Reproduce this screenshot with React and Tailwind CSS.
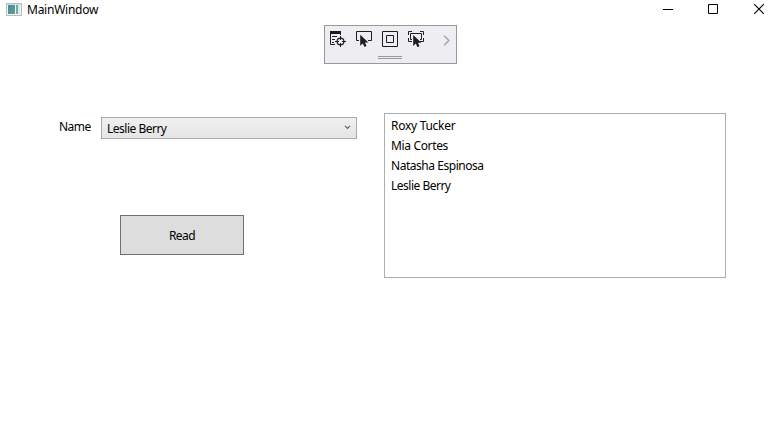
const NAMES = [
  { name: 'Roxy Tucker', tracking: 'tracking-[-0.28px]' },
  { name: 'Mia Cortes', tracking: 'tracking-[-0.35px]' },
  { name: 'Natasha Espinosa', tracking: 'tracking-[-0.46px]' },
  { name: 'Leslie Berry', tracking: 'tracking-[-0.5px]' },
];

function AppIcon() {
  return (
    <svg width="16" height="14" viewBox="0 0 16 14" shapeRendering="crispEdges">
      <defs>
        <linearGradient id="pane" x1="0" y1="0" x2="1" y2="1">
          <stop offset="0" stopColor="#4a86a8" />
          <stop offset="1" stopColor="#58a58a" />
        </linearGradient>
        <linearGradient id="strip" x1="0" y1="0" x2="0" y2="1">
          <stop offset="0" stopColor="#6fa3b8" />
          <stop offset="1" stopColor="#6fb98a" />
        </linearGradient>
      </defs>
      <rect x="0.5" y="0.5" width="15" height="12" fill="#f6f6f6" stroke="#b9bbbe" />
      <rect x="1" y="1" width="14" height="1" fill="#d9dbde" />
      <rect x="2" y="2" width="7" height="9" fill="url(#pane)" />
      <rect x="10" y="2" width="2" height="9" fill="url(#strip)" />
      <rect x="12" y="2" width="2" height="9" fill="#dfe5e8" />
    </svg>
  );
}

function Cursor({ x, y }) {
  return (
    <path
      transform={`translate(${x} ${y})`}
      d="M0 0V11L2.6 8.6L4.3 12.2L6.3 11.3L4.8 7.8H8.2Z"
      fill="#1e1e1e"
      stroke="none"
    />
  );
}

function LiveTreeIcon() {
  return (
    <svg width="16" height="16" viewBox="0 0 16 16" fill="none" stroke="#1e1e1e">
      <path d="M0 0H11V3H0Z" fill="#1e1e1e" stroke="none" />
      <path d="M0.5 2V13.5H5M10.5 2V4M2 5.5H7M2 8.5H5M2 11.5H4" />
      <circle cx="10.5" cy="10.5" r="3.4" strokeWidth="1.2" />
      <path d="M10.5 5V9M10.5 12V16M5 10.5H9M12 10.5H16" />
    </svg>
  );
}

function SelectIcon() {
  return (
    <svg width="16" height="16" viewBox="0 0 16 16" fill="none" stroke="#1e1e1e">
      <path d="M3 9.5H0.5V0.5H15.5V9.5H12" />
      <Cursor x={4.2} y={3.8} />
    </svg>
  );
}

function AdornersIcon() {
  return (
    <svg width="16" height="16" viewBox="0 0 16 16" fill="none" stroke="#1e1e1e">
      <path d="M0.5 0.5H15.5V15.5H0.5ZM4.5 4.5H11.5V11.5H4.5Z" />
    </svg>
  );
}

function TrackFocusIcon() {
  return (
    <svg width="16" height="16" viewBox="0 0 16 16" fill="none" stroke="#1e1e1e">
      <path d="M0.5 4V0.5H4M12 0.5H15.5V4M15.5 7V10.5H12M0.5 7V10.5H4" />
      <path d="M4 8.5H2.5V2.5H13.5V8.5H12" />
      <Cursor x={5.2} y={4} />
    </svg>
  );
}

function DebugToolbar() {
  return (
    <div className="ml-[324px] h-[39px] w-[133px] border border-[#999999] bg-[#eeeef2]">
      <div className="flex h-[30px] items-start pt-[5px] pl-[5px]">
        <div className="flex gap-[10px]">
          <LiveTreeIcon />
          <SelectIcon />
          <AdornersIcon />
          <TrackFocusIcon />
        </div>
        <svg className="mt-[4px] ml-[19px]" width="8" height="11" viewBox="0 0 8 11" fill="none" stroke="#a2a4a5" strokeWidth="1.4">
          <path d="M1.2 0.8L5.9 5.5L1.2 10.2" />
        </svg>
      </div>
      <div className="ml-[53px] h-[3px] w-[24px] border-y border-[#999999]" />
    </div>
  );
}

export default function App() {
  return (
    <div className="h-[429px] w-[779px] overflow-hidden bg-white font-['Noto_Sans','Open_Sans',sans-serif] text-[12px] leading-[20px] text-black">
      <header className="flex h-[20px] items-start pl-[6px]">
        <div className="pt-[3px]">
          <AppIcon />
        </div>
        <span className="ml-[5px] tracking-[-0.25px]">MainWindow</span>
        <svg className="ml-auto" width="116" height="20" viewBox="0 0 116 20" fill="none" stroke="#000">
          <path d="M0 9.5H10M45.5 4.5H54.5V13.5H45.5Z" />
          <path d="M91.2 4.2L100.8 13.8M100.8 4.2L91.2 13.8" strokeWidth="1.1" />
        </svg>
      </header>

      <div className="pt-[5px]">
        <DebugToolbar />
      </div>

      <main className="flex items-start pt-[49px] pl-[59px]">
        <section className="w-[325px]">
          <div className="flex pt-[4px]">
            <label className="w-[42px] tracking-[-0.5px]">Name</label>
            <button className="flex h-[22px] w-[256px] items-center border border-[#acacac] bg-linear-to-b from-[#f0f0f0] to-[#e5e5e5] pt-[2px] pl-[5px]">
              <span className="tracking-[-0.5px]">Leslie Berry</span>
              <svg className="mr-[5px] mb-[4px] ml-auto" width="7" height="5" viewBox="0 0 7 5" fill="none" stroke="#606060" strokeWidth="1.2">
                <path d="M1 0.8L3.5 3.3L6 0.8" />
              </svg>
            </button>
          </div>
          <button className="mt-[76px] ml-[61px] flex h-[40px] w-[124px] items-center justify-center border border-[#707070] bg-[#dddddd] pt-[2px] tracking-[-0.55px]">
            Read
          </button>
        </section>

        <ul className="h-[165px] w-[342px] border border-[#abadb3] bg-white pt-[2px] pl-[6px]">
          {NAMES.map(({ name, tracking }) => (
            <li key={name} className={`h-[20px] ${tracking}`}>{name}</li>
          ))}
        </ul>
      </main>
    </div>
  );
}
